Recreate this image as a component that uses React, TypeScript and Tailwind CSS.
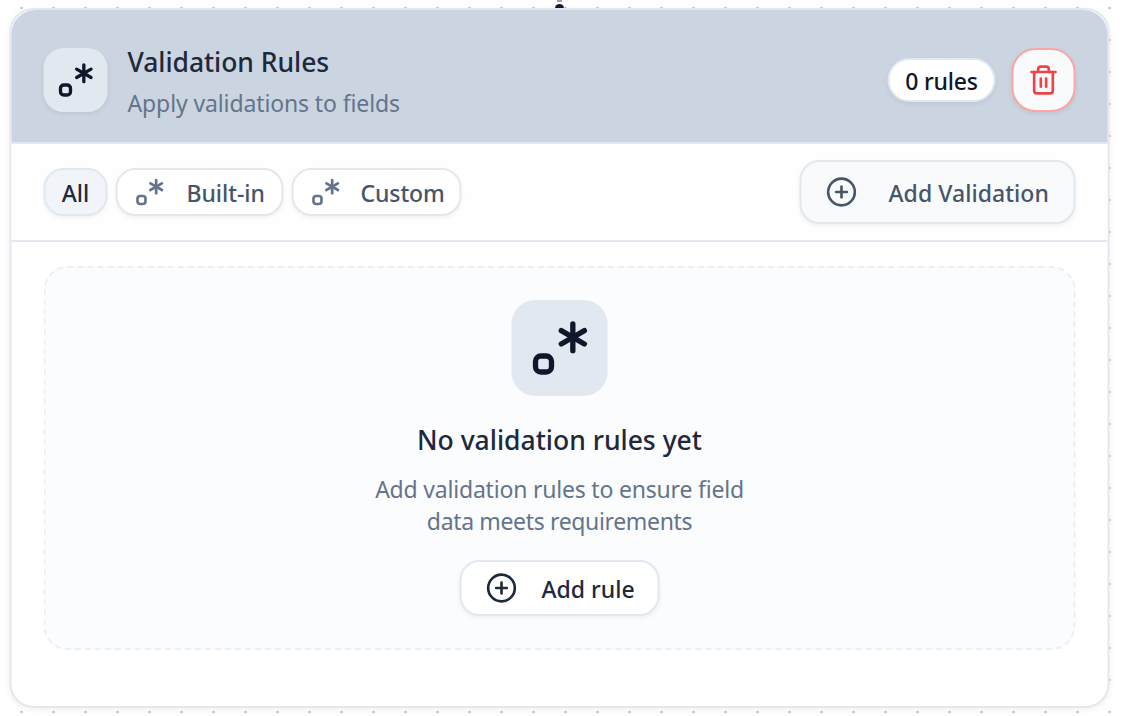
import { CirclePlus, Regex, Trash2 } from "lucide-react";

const filters = [
  { name: "Built-in", width: "w-[168px]", label: "ml-[21px] tracking-[-0.05px]" },
  { name: "Custom", width: "w-[170px]", label: "ml-[19px] tracking-[-0.1px]" },
];

export default function App() {
  return (
    <div className="relative h-[716px] w-[1121px] overflow-hidden bg-white bg-[radial-gradient(circle_at_center,#b4b4b8_0.8px,transparent_1.5px)] bg-[length:32px_32px] bg-[position:5.5px_-8px] pt-2 font-['Noto_Sans',sans-serif]">
      <div className="absolute top-0 left-[557px] h-[1.5px] w-[5px] bg-[#94a3b8]" />
      <div className="absolute top-1 left-[555px] h-[9px] w-[9px] rounded-full bg-[#1a192b]" />
      <div className="relative ml-[9px] flex h-[700px] w-[1100px] translate-x-[0.5px] flex-col rounded-[24px] border-2 border-[#e2e8f0] bg-white shadow-[0_2px_6px_rgba(0,0,0,0.06)]">
        <header className="flex h-[134px] shrink-0 items-center justify-between rounded-t-[24px] border-b-2 border-[#e2e8f0] bg-[#cbd5e1] px-8 pt-2">
          <div className="flex items-center gap-5">
            <div className="flex size-16 items-center justify-center rounded-[20px] bg-[#e2e8f0] shadow-[0_2px_4px_rgba(0,0,0,0.07)]">
              <Regex className="size-10 text-[#0f172a]" />
            </div>
            <div className="flex flex-col pt-1 whitespace-nowrap">
              <h1 className="h-[42px] text-[26.5px] leading-[42px] font-[550] tracking-[-0.05px] text-[#1e293b]">Validation Rules</h1>
              <p className="h-10 text-[23px] leading-10 tracking-[-0.12px] text-[#64748b]">Apply validations to fields</p>
            </div>
          </div>
          <div className="flex items-center gap-4">
            <span className="flex h-11 w-[108px] items-center justify-center rounded-full border-2 border-[#e2e8f0] bg-white pt-0.5 text-[23px] font-[550] tracking-[-0.2px] whitespace-nowrap text-[#0f172a] shadow-[0_2px_4px_rgba(0,0,0,0.07)]">0 rules</span>
            <button className="flex size-16 items-center justify-center rounded-[24px] border-2 border-[#fca5a5] bg-[#f8fafc] shadow-[0_2px_4px_rgba(0,0,0,0.07)]">
              <Trash2 className="size-8 text-[#ef4444]" />
            </button>
          </div>
        </header>
        <div className="flex h-[98px] shrink-0 items-center justify-between border-b-2 border-[#e2e8f0] bg-[#fefefe] px-8">
          <div className="flex gap-2 text-[23px] font-[550] whitespace-nowrap text-[#475569]">
            <button className="flex h-12 w-16 items-center justify-center rounded-[20px] border-2 border-[#e2e8f0] bg-[#f1f5f9] pt-0.5 text-[#1e293b] shadow-[0_2px_4px_rgba(0,0,0,0.05)]">All</button>
            {filters.map((filter) => (
              <button key={filter.name} className={`flex h-12 items-center rounded-[20px] border-2 border-[#e2e8f0] bg-white px-4 shadow-[0_2px_4px_rgba(0,0,0,0.05)] ${filter.width}`}>
                <Regex className="size-8 shrink-0 text-[#64748b]" />
                <span className={`pt-0.5 ${filter.label}`}>{filter.name}</span>
              </button>
            ))}
          </div>
          <button className="flex h-16 w-[276px] items-center gap-[31px] rounded-[20px] border-2 border-[#e2e8f0] bg-[#f8fafc] pl-6 text-[23px] font-[550] whitespace-nowrap text-[#475569] shadow-[0_2px_4px_rgba(0,0,0,0.05)]">
            <CirclePlus className="size-8" />
            <span className="pt-0.5 tracking-[0.05px]">Add Validation</span>
          </button>
        </div>
        <main className="px-8 pt-6">
          <section className="flex h-96 flex-col items-center rounded-[24px] border-2 border-dashed border-[#eceff5] bg-[#fbfcfe] pt-8 whitespace-nowrap">
            <div className="flex size-24 items-center justify-center rounded-[24px] bg-[#e2e8f0]">
              <Regex className="size-16 text-[#0f172a]" />
            </div>
            <h2 className="mt-6 h-10 text-[26.5px] leading-10 font-[550] text-[#1e293b]">No validation rules yet</h2>
            <p className="mt-[13px] text-center text-[23px] leading-8 tracking-[-0.2px] text-[#64748b]">
              Add validation rules to ensure field
              <br />
              <span className="tracking-[-0.35px]">data meets requirements</span>
            </p>
            <button className="mt-[23px] flex h-14 w-[200px] items-center gap-6 rounded-[20px] border-2 border-[#e2e8f0] bg-white pl-6 text-[23px] font-[550] text-[#1e293b] shadow-[0_2px_4px_rgba(0,0,0,0.05)]">
              <CirclePlus className="size-8" />
              <span className="pt-0.5">Add rule</span>
            </button>
          </section>
        </main>
      </div>
    </div>
  );
}
